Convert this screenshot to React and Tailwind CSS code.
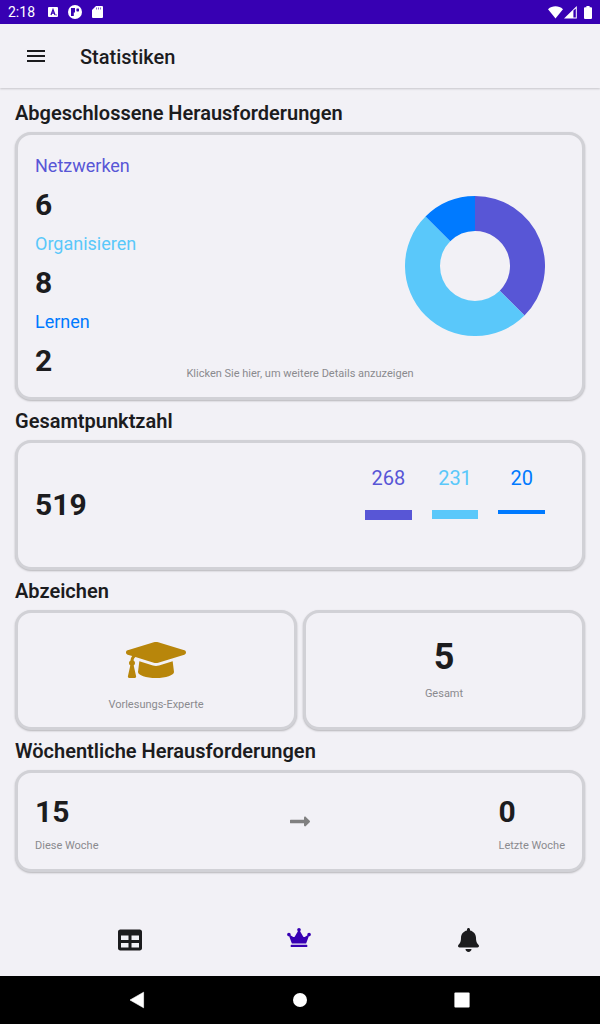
import { FaGraduationCap, FaTable, FaCrown, FaBell, FaLongArrowAltRight } from "react-icons/fa";

const card =
  "rounded-2xl border-[3px] border-[#d1d1d6] bg-[#f2f1f6] shadow-[0_1px_2px_rgba(0,0,0,0.25)]";

const challenges = [
  { label: "Netzwerken", value: 6, color: "text-[#5856d6]" },
  { label: "Organisieren", value: 8, color: "text-[#5ac8fa]" },
  { label: "Lernen", value: 2, color: "text-[#007aff]" },
];

const points = [
  { value: 268, text: "text-[#5856d6]", bar: "h-[10px] bg-[#5856d6]" },
  { value: 231, text: "text-[#5ac8fa]", bar: "h-[9px] bg-[#5ac8fa]" },
  { value: 20, text: "text-[#007aff]", bar: "h-[4px] bg-[#007aff]" },
];

function StatusBar() {
  return (
    <div className="flex h-6 items-center bg-[#3700b3] px-2 text-white">
      <span className="w-10 text-sm leading-6">2:18</span>
      <svg className="h-[10px] w-[10px]" viewBox="0 0 10 10">
        <rect width="10" height="10" rx="1" fill="#fff" />
        <path d="M3 8 L5 2.5 L7 8 M3.8 6.2 H6.2" stroke="#3700b3" strokeWidth="1.2" fill="none" />
        <rect x="7.6" y="7.4" width="1" height="1" fill="#3700b3" />
      </svg>
      <svg className="ml-[10px] h-[14px] w-[14px]" viewBox="0 0 14 14">
        <circle cx="7" cy="7" r="7" fill="#fff" />
        <path d="M3 3 H7 V7.4 H5.8 V11 H3 Z" fill="#3700b3" />
        <rect x="8.4" y="3.4" width="2.6" height="3" rx="0.6" fill="#3700b3" />
      </svg>
      <svg className="ml-[10px] h-[12px] w-[11px]" viewBox="0 0 11 12">
        <path d="M4 0 H10 a1 1 0 0 1 1 1 V11 a1 1 0 0 1 -1 1 H1 a1 1 0 0 1 -1 -1 V4 Z" fill="#fff" />
        <path d="M4.5 1.5 V3.5 M6.5 1.5 V3.5 M8.5 1.5 V3.5" stroke="#8a6ad2" strokeWidth="1" />
      </svg>
      <span className="grow" />
      <svg className="h-[13px] w-[15px]" viewBox="0 0 15 13">
        <path d="M7.5 12.6 L0 3.2 C4.4 -0.6 10.6 -0.6 15 3.2 Z" fill="#fff" />
      </svg>
      <svg className="ml-px h-[13px] w-[13px]" viewBox="0 0 13 13">
        <path d="M0 12.6 L12.8 0 V12.6 Z M9.4 4.6 V11.6 H11.8 V2.4 Z" fill="#fff" fillRule="evenodd" />
      </svg>
      <svg className="ml-[7px] h-[13px] w-[8px]" viewBox="0 0 8 13">
        <path d="M2.4 0 H5.6 V1.2 H7 a1 1 0 0 1 1 1 V12 a1 1 0 0 1 -1 1 H1 a1 1 0 0 1 -1 -1 V2.2 a1 1 0 0 1 1 -1 H2.4 Z" fill="#fff" />
      </svg>
    </div>
  );
}

function SectionTitle({ children }) {
  return <h2 className="flex h-10 items-center pt-[2px] text-xl font-semibold">{children}</h2>;
}

function Donut() {
  return (
    <svg className="h-[140px] w-[140px] shrink-0" viewBox="-70 -70 140 140" role="img" aria-label="Verteilung">
      <path d="M0 -70 A70 70 0 0 1 49.5 49.5 L24.75 24.75 A35 35 0 0 0 0 -35 Z" fill="#5856d6" />
      <path d="M49.5 49.5 A70 70 0 0 1 -49.5 -49.5 L-24.75 -24.75 A35 35 0 0 0 24.75 24.75 Z" fill="#5ac8fa" />
      <path d="M-49.5 -49.5 A70 70 0 0 1 0 -70 L0 -35 A35 35 0 0 0 -24.75 -24.75 Z" fill="#007aff" />
    </svg>
  );
}

export default function App() {
  return (
    <div className="flex min-h-screen flex-col bg-[#f2f1f6] font-['Roboto',sans-serif] text-[#1c1c1e]">
      <StatusBar />
      <header className="flex h-16 items-center gap-8 px-6 shadow-[0_1px_2px_rgba(0,0,0,0.18)]">
        <button type="button" aria-label="Menü" className="h-6 w-6">
          <svg viewBox="0 0 24 24" className="h-6 w-6">
            <path d="M3 6 H21 V8 H3 Z M3 11 H21 V13 H3 Z M3 16 H21 V18 H3 Z" fill="#1c1c1e" />
          </svg>
        </button>
        <h1 className="pt-[2px] text-xl font-medium">Statistiken</h1>
      </header>

      <main className="flex grow flex-col px-[15px] pt-1">
        <SectionTitle>Abgeschlossene Herausforderungen</SectionTitle>
        <button
          type="button"
          className={`${card} grid grid-cols-[minmax(0,1fr)_auto_minmax(0,1fr)] px-[17px] pt-4 pb-3 text-left`}
        >
          <span className="flex flex-col">
            {challenges.map((c) => (
              <span key={c.label} className="flex flex-col">
                <span className={`text-lg leading-[30px] ${c.color}`}>{c.label}</span>
                <span className="text-3xl leading-[48px] font-bold">{c.value}</span>
              </span>
            ))}
          </span>
          <span className="self-end pb-[3px] text-[11px] leading-4 text-[#8a8a8e]">
            Klicken Sie hier, um weitere Details anzuzeigen
          </span>
          <span className="flex items-center justify-end self-center pr-5 pb-1">
            <Donut />
          </span>
        </button>

        <SectionTitle>Gesamtpunktzahl</SectionTitle>
        <section className={`${card} flex h-[130px] items-center justify-between pr-[37px] pl-[17px]`}>
          <span className="text-3xl font-bold">519</span>
          <div className="flex w-[180px] gap-5 self-start pt-5">
            {points.map((p) => (
              <div key={p.value} className="flex flex-1 flex-col gap-4">
                <span className={`text-center text-xl leading-[31px] ${p.text}`}>{p.value}</span>
                <span className={p.bar} />
              </div>
            ))}
          </div>
        </section>

        <SectionTitle>Abzeichen</SectionTitle>
        <div className="grid grid-cols-2 gap-[6px]">
          <section className={`${card} flex h-[120px] flex-col items-center pt-[23px]`}>
            <FaGraduationCap className="h-12 w-[60px] text-[#b8860b]" />
            <span className="mt-[13px] text-[11px] leading-4 text-[#8a8a8e]">Vorlesungs-Experte</span>
          </section>
          <section className={`${card} flex h-[120px] flex-col items-center pt-6`}>
            <span className="text-4xl leading-[40px] font-bold">5</span>
            <span className="mt-[9px] text-[11px] leading-4 text-[#8a8a8e]">Gesamt</span>
          </section>
        </div>

        <SectionTitle>Wöchentliche Herausforderungen</SectionTitle>
        <section className={`${card} grid h-[102px] grid-cols-[1fr_auto_1fr] items-center px-[17px]`}>
          <div className="flex flex-col gap-2 pt-[5px]">
            <span className="text-3xl leading-[36px] font-bold">15</span>
            <span className="text-[11px] leading-4 text-[#8a8a8e]">Diese Woche</span>
          </div>
          <FaLongArrowAltRight className="h-[23px] w-5 text-[#808080]" />
          <div className="flex flex-col gap-2 justify-self-end pt-[5px]">
            <span className="text-3xl leading-[36px] font-bold">0</span>
            <span className="text-[11px] leading-4 text-[#8a8a8e]">Letzte Woche</span>
          </div>
        </section>
      </main>

      <nav className="grid h-[60px] grid-cols-3 items-start pt-3 pr-[47px] pl-[45px]">
        <a href="#tabelle" aria-label="Tabelle" className="flex justify-center">
          <FaTable className="h-6 w-6" />
        </a>
        <a href="#statistiken" aria-label="Statistiken" className="flex justify-center text-[#3700b3]">
          <FaCrown className="h-[19px] w-6" />
        </a>
        <a href="#mitteilungen" aria-label="Mitteilungen" className="flex justify-center">
          <FaBell className="h-6 w-[21px]" />
        </a>
      </nav>

      <footer className="flex h-12 items-center justify-center bg-black">
        <div className="flex w-[348px] justify-between">
          <button type="button" aria-label="Zurück" className="h-6 w-6">
            <svg viewBox="0 0 24 24" className="h-6 w-6">
              <path d="M4 12 L17.6 4.2 V19.8 Z" fill="#fff" stroke="#fff" strokeLinejoin="round" strokeWidth="0.6" />
            </svg>
          </button>
          <button type="button" aria-label="Startseite" className="h-6 w-6">
            <svg viewBox="0 0 24 24" className="h-6 w-6">
              <circle cx="12" cy="12" r="7" fill="#fff" />
            </svg>
          </button>
          <button type="button" aria-label="Übersicht" className="h-6 w-6">
            <svg viewBox="0 0 24 24" className="h-6 w-6">
              <rect x="4.4" y="4.4" width="15.2" height="15.2" rx="1" fill="#fff" />
            </svg>
          </button>
        </div>
      </footer>
    </div>
  );
}
